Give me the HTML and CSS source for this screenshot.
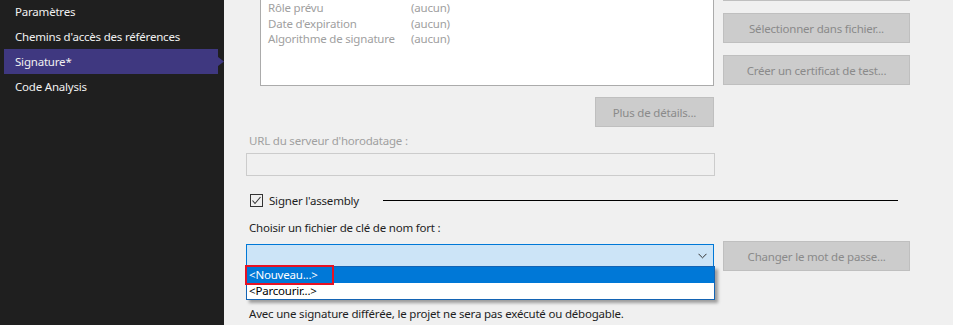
FILE: index.html
```html
<!DOCTYPE html>
<html lang="fr">

<head>
    <meta charset="UTF-8">
    <meta name="viewport" content="width=device-width, initial-scale=1.0">
    <title>Signature</title>

    <link rel="stylesheet" href="styles.css">
</head>

<body>
    <div class="sidebar">
        <div class="nav-item">Paramètres</div>
        <div class="nav-item">Chemins d'accès des références</div>
        <div class="nav-item selected">Signature*</div>
        <div class="nav-item">Code Analysis</div>
    </div>

    <div class="main">
        <div class="content">
            <div class="cert-row">
                <div class="cert-col">
                    <div class="cert-box">
                        <div class="cert-line"><span class="cert-key">Délivré à</span><span>(aucun)</span></div>
                        <div class="cert-line"><span class="cert-key">Délivré par</span><span>(aucun)</span></div>
                        <div class="cert-line"><span class="cert-key">Rôle prévu</span><span>(aucun)</span></div>
                        <div class="cert-line"><span class="cert-key">Date d'expiration</span><span>(aucun)</span></div>
                        <div class="cert-line"><span class="cert-key">Algorithme de signature</span><span>(aucun)</span></div>
                    </div>
                    <div class="details-row">
                        <button class="btn btn-small" disabled>Plus de détails...</button>
                    </div>
                </div>
                <div class="btn-col">
                    <button class="btn" disabled>Sélectionner dans le magasin...</button>
                    <button class="btn" disabled>Sélectionner dans fichier...</button>
                    <button class="btn" disabled>Créer un certificat de test...</button>
                </div>
            </div>

            <div class="label disabled">URL du serveur d'horodatage :</div>
            <div class="textbox"></div>

            <div class="check-row">
                <span class="checkbox">
                    <svg width="11" height="11" viewBox="0 0 11 11">
                        <polyline points="1.5,5.5 4,8.5 9.5,2" fill="none" stroke="#333" stroke-width="1.1"/>
                    </svg>
                </span>
                <span class="check-text">Signer l'assembly</span>
                <span class="group-line"></span>
            </div>

            <div class="label label-key">Choisir un fichier de clé de nom fort :</div>
            <div class="combo-row">
                <div class="combo-wrap">
                    <div class="combo">
                        <svg class="chevron" width="9" height="6" viewBox="0 0 9 6">
                            <polyline points="0.5,0.8 4.5,4.8 8.5,0.8" fill="none" stroke="#333" stroke-width="1"/>
                        </svg>
                    </div>
                    <div class="dropdown">
                        <div class="option active">&lt;Nouveau...&gt;</div>
                        <div class="option">&lt;Parcourir...&gt;</div>
                        <span class="highlight-mark"></span>
                    </div>
                </div>
                <button class="btn" disabled>Changer le mot de passe...</button>
            </div>

            <div class="label note">Avec une signature différée, le projet ne sera pas exécuté ou débogable.</div>
        </div>
    </div>
</body>

</html>
```

FILE: styles.css
```css
* {
    margin: 0;
    padding: 0;
    box-sizing: border-box;
    font-family: 'Noto Sans', 'Open Sans', sans-serif;
    font-size: 11.5px;
    letter-spacing: -0.2px;
}
body {
    display: flex;
    height: 325px;
    overflow: hidden;
    background-color: rgb(240, 240, 240);
}
.sidebar {
    width: 224px;
    flex-shrink: 0;
    background-color: rgb(31, 31, 31);
    margin-top: -1px;
}
.nav-item {
    height: 25px;
    line-height: 25px;
    padding-left: 15px;
    color: rgb(241, 241, 241);
    white-space: nowrap;
}
.nav-item.selected {
    margin-left: 4px;
    padding-left: 11px;
    width: 220px;
    background-color: rgb(63, 56, 128);
    clip-path: polygon(0 0, 214px 0, 214px 8px, 220px 12.5px, 214px 17px, 214px 100%, 0 100%);
}
.main {
    flex: 1;
    overflow: hidden;
    padding-left: 22px;
}
.content {
    width: 664px;
    margin-top: -36px;
}
.cert-row {
    display: flex;
    gap: 9px;
}
.cert-col {
    width: 469px;
}
.cert-box {
    margin-left: 14px;
    height: 122px;
    background: #fff;
    border: 1px solid rgb(171, 171, 171);
    padding: 4px 7px;
    color: rgb(160, 160, 160);
}
.cert-line {
    display: flex;
    height: 15.5px;
    line-height: 15.5px;
    white-space: nowrap;
}
.cert-key {
    width: 143px;
}
.details-row {
    display: flex;
    justify-content: flex-end;
    margin-top: 11px;
}
.btn-col {
    display: flex;
    flex-direction: column;
    gap: 12px;
    padding-top: 7px;
}
.btn {
    width: 187px;
    height: 30px;
    background-color: rgb(204, 204, 204);
    border: 1px solid rgb(191, 191, 191);
    color: rgb(138, 138, 138);
    white-space: nowrap;
}
.btn-small {
    width: 119px;
}
.label {
    height: 16px;
    line-height: 16px;
    padding-left: 3px;
    color: rgb(30, 30, 30);
    white-space: nowrap;
}
.label.disabled {
    color: rgb(160, 160, 160);
    margin-top: 6px;
}
.textbox {
    width: 469px;
    height: 23px;
    margin-top: 4px;
    border: 1px solid rgb(204, 204, 204);
    background-color: rgb(240, 240, 240);
}
.check-row {
    display: flex;
    align-items: center;
    height: 16px;
    margin-top: 16px;
    padding-left: 4px;
    padding-right: 12px;
}
.checkbox {
    width: 13px;
    height: 13px;
    border: 1px solid rgb(51, 51, 51);
    display: flex;
    align-items: center;
    justify-content: center;
}
.check-text {
    margin-left: 6px;
    color: rgb(30, 30, 30);
    white-space: nowrap;
}
.group-line {
    flex: 1;
    height: 1px;
    margin-left: 24px;
    background-color: #000;
}
.label-key {
    margin-top: 12px;
}
.combo-row {
    display: flex;
    gap: 9px;
    margin-top: 5px;
}
.combo-wrap {
    position: relative;
    width: 469px;
    margin-top: 3px;
    z-index: 2;
}
.combo {
    height: 23px;
    background-color: rgb(204, 228, 247);
    border: 1px solid rgb(0, 120, 215);
    display: flex;
    align-items: center;
    justify-content: flex-end;
    padding-right: 6px;
}
.dropdown {
    position: absolute;
    top: 22px;
    left: 0;
    width: 469px;
    background: #fff;
    border: 1px solid rgb(20, 100, 180);
    box-shadow: 3px 3px 3px rgba(0, 0, 0, 0.35);
}
.option {
    height: 16px;
    line-height: 16px;
    padding-left: 2px;
    color: #000;
}
.option.active {
    background-color: rgb(0, 120, 215);
    color: #fff;
}
.highlight-mark {
    position: absolute;
    left: -2px;
    top: -2px;
    width: 89px;
    height: 20px;
    border: 2px solid rgb(232, 17, 35);
}
.note {
    margin-top: 35px;
}
```
